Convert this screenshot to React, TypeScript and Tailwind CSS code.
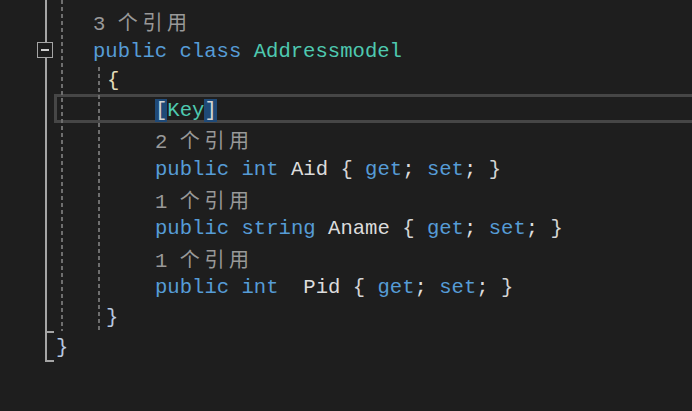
const mono = "font-['Liberation_Mono','Noto_Sans_CJK_SC',monospace]";

const dash =
  "bg-[repeating-linear-gradient(to_bottom,#6e6e6e_0px,#6e6e6e_4px,transparent_4px,transparent_7px)]";

function Refs({ n }: { n: number }) {
  return (
    <span className="text-[#999999]">
      {n}{" "}
      {["个", "引", "用"].map((c) => (
        <span key={c} className="inline-block w-[24.7px] font-['Noto_Sans_CJK_SC',sans-serif] text-[20px]">
          {c}
        </span>
      ))}
    </span>
  );
}

const kw = "text-[#569cd6]";
const id = "text-[#dcdcdc]";
const br = "text-[#d4d4d4]";
const line = "h-[29.6px] whitespace-pre pt-[2px]";

function Accessors() {
  return (
    <>
      <span className={br}>{"{"}</span> <span className={kw}>get</span>
      <span className={id}>;</span> <span className={kw}>set</span>
      <span className={id}>;</span> <span className={br}>{"}"}</span>
    </>
  );
}

export default function App() {
  return (
    <div className="relative h-[411px] w-[692px] overflow-hidden bg-[#1e1e1e]">
      {/* outlining margin */}
      <div className="absolute left-[45px] top-0 h-[42px] w-[2px] bg-[#a5a5a5]" />
      <div className="absolute left-[37px] top-[42px] flex h-[16px] w-[16px] items-center justify-center border border-[#a5a5a5] bg-[#1e1e1e]">
        <div className="h-[2px] w-[8px] bg-[#d0d0d0]" />
      </div>
      <div className="absolute left-[45px] top-[58px] h-[304px] w-[2px] bg-[#a5a5a5]" />
      <div className="absolute left-[45px] top-[331px] h-[2px] w-[9px] bg-[#a5a5a5]" />
      <div className="absolute left-[45px] top-[360px] h-[2px] w-[9px] bg-[#a5a5a5]" />

      {/* indent guides */}
      <div className={`absolute left-[61px] top-0 h-[331px] w-[2px] ${dash}`} />
      <div className={`absolute left-[98px] top-[67px] h-[265px] w-[2px] ${dash}`} />

      {/* code */}
      <div className={`flex flex-col pt-[5px] text-[20.6px] leading-[29.6px] ${mono}`}>
        <div className={`${line} pl-[93px]`}>
          <Refs n={3} />
        </div>
        <div className={`${line} pl-[93px]`}>
          <span className={kw}>public</span> <span className={kw}>class</span>{" "}
          <span className="text-[#4ec9b0]">Addressmodel</span>
        </div>
        <div className={`${line} pl-[107px]`}>
          <span className="text-[#e3dcb8]">{"{"}</span>
        </div>
        <div className="ml-[54px] h-[29.6px] whitespace-pre border-[3px] border-r-0 border-[#464646] pl-[98px] pt-[2px] leading-[23.6px]">
          <span className="bg-[#1f4a78] text-[#d4d4d4]">[</span>
          <span className="text-[#4ec9b0]">Key</span>
          <span className="bg-[#1f4a78] text-[#d4d4d4]">]</span>
        </div>
        <div className={`${line} pl-[155px]`}>
          <Refs n={2} />
        </div>
        <div className={`${line} pl-[155px]`}>
          <span className={kw}>public</span> <span className={kw}>int</span>{" "}
          <span className={id}>Aid</span> <Accessors />
        </div>
        <div className={`${line} pl-[155px]`}>
          <Refs n={1} />
        </div>
        <div className={`${line} pl-[155px]`}>
          <span className={kw}>public</span> <span className={kw}>string</span>{" "}
          <span className={id}>Aname</span> <Accessors />
        </div>
        <div className={`${line} pl-[155px]`}>
          <Refs n={1} />
        </div>
        <div className={`${line} pl-[155px]`}>
          <span className={kw}>public</span> <span className={kw}>int</span>
          {"  "}
          <span className={id}>Pid</span> <Accessors />
        </div>
        <div className={`${line} pl-[106px]`}>
          <span className="text-[#b8c8e0]">{"}"}</span>
        </div>
        <div className={`${line} pl-[56px]`}>
          <span className="text-[#b8c8e0]">{"}"}</span>
        </div>
      </div>
    </div>
  );
}
